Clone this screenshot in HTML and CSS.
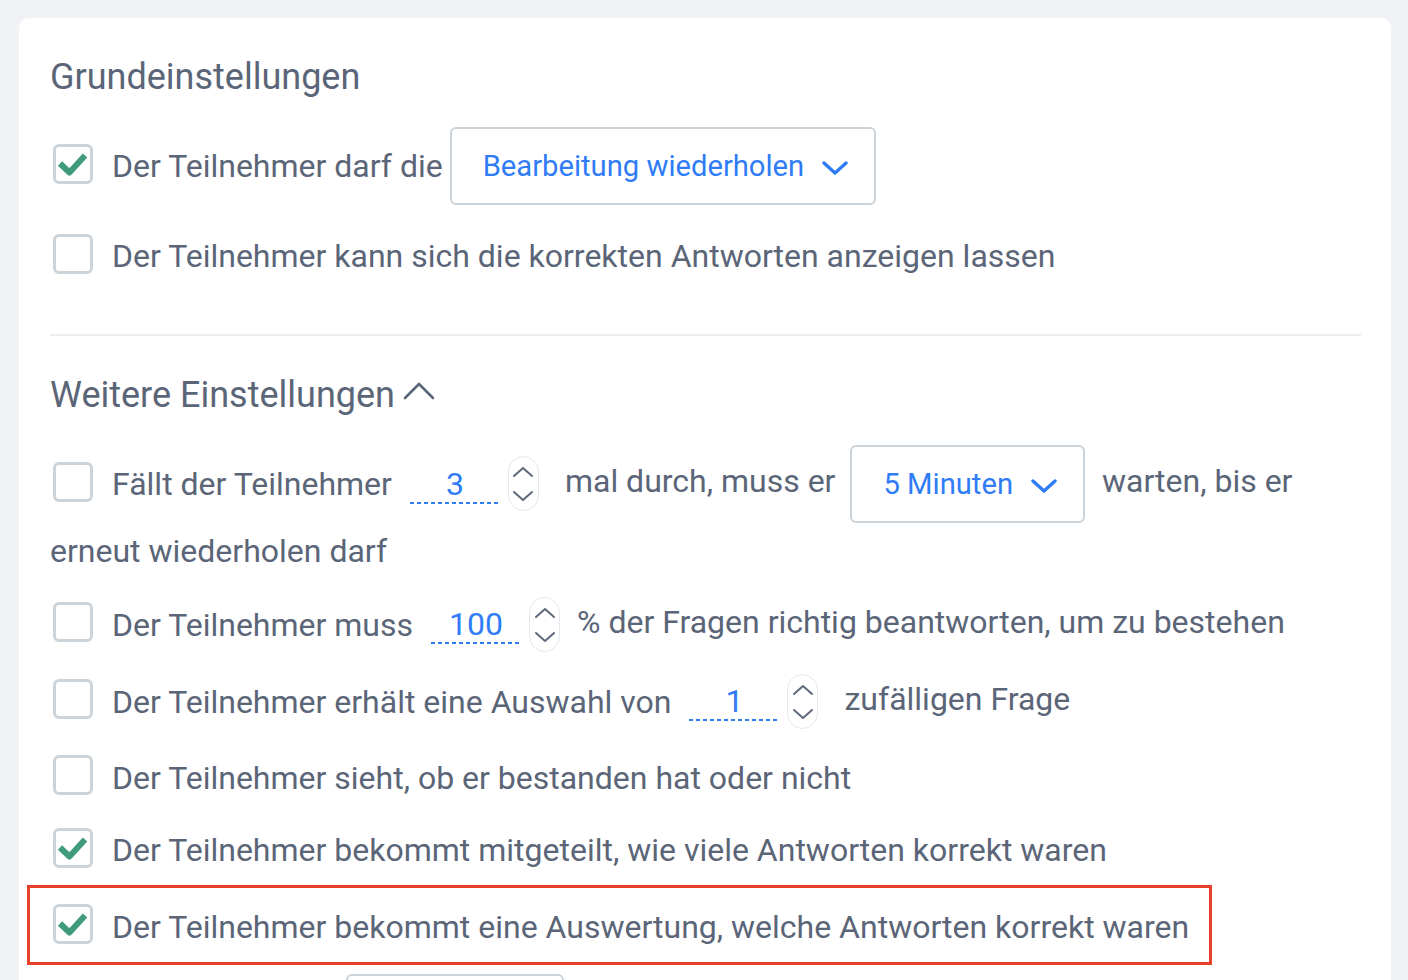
FILE: index.html
```html
<!DOCTYPE html>
<html lang="de">
<head>
<meta charset="utf-8">
<title>Einstellungen</title>
<link rel="stylesheet" href="styles.css">
</head>
<body>
<div class="card">
  <h2 class="heading">Grundeinstellungen</h2>

  <div class="row first"><span class="cb checked"><svg viewBox="0 0 34 34" width="34" height="34"><path d="M4 16.5 L13.5 25.5 L29 8.5" fill="none" stroke="#3f9b7b" stroke-width="6" stroke-linejoin="round"/></svg></span><span class="txt">Der Teilnehmer darf die</span><span class="select sel1">Bearbeitung wiederholen<svg class="chev" viewBox="0 0 26 14" width="26" height="14"><path d="M2 2 L13 12 L24 2" fill="none" stroke="#2f7cf6" stroke-width="3.4" stroke-linecap="round" stroke-linejoin="round"/></svg></span></div>

  <div class="row"><span class="cb"></span><span class="txt">Der Teilnehmer kann sich die korrekten Antworten anzeigen lassen</span></div>

  <hr class="divider">

  <h2 class="heading h2">Weitere Einstellungen<svg class="caret" viewBox="0 0 32 18" width="32" height="18"><path d="M2 16 L16 2 L30 16" fill="none" stroke="#5b6578" stroke-width="2.6" stroke-linecap="round" stroke-linejoin="round"/></svg></h2>

  <div class="row first wrap"><span class="cb"></span><span class="txt">Fällt der Teilnehmer</span><span class="num">3</span><span class="spin"><svg viewBox="0 0 22 12" width="22" height="12"><path d="M2 10 L11 2 L20 10" fill="none" stroke="#5f6a7c" stroke-width="2" stroke-linecap="round" stroke-linejoin="round"/></svg><svg viewBox="0 0 22 12" width="22" height="12"><path d="M2 2 L11 10 L20 2" fill="none" stroke="#5f6a7c" stroke-width="2" stroke-linecap="round" stroke-linejoin="round"/></svg></span>mal durch, muss er<span class="select sel2">5 Minuten<svg class="chev" viewBox="0 0 26 14" width="26" height="14"><path d="M2 2 L13 12 L24 2" fill="none" stroke="#2f7cf6" stroke-width="3.4" stroke-linecap="round" stroke-linejoin="round"/></svg></span>warten, bis er erneut wiederholen darf</div>

  <div class="row r4"><span class="cb"></span><span class="txt">Der Teilnehmer muss</span><span class="num">100</span><span class="spin pct"><svg viewBox="0 0 22 12" width="22" height="12"><path d="M2 10 L11 2 L20 10" fill="none" stroke="#5f6a7c" stroke-width="2" stroke-linecap="round" stroke-linejoin="round"/></svg><svg viewBox="0 0 22 12" width="22" height="12"><path d="M2 2 L11 10 L20 2" fill="none" stroke="#5f6a7c" stroke-width="2" stroke-linecap="round" stroke-linejoin="round"/></svg></span>% der Fragen richtig beantworten, um zu bestehen</div>

  <div class="row tight"><span class="cb"></span><span class="txt">Der Teilnehmer erhält eine Auswahl von</span><span class="num">1</span><span class="spin"><svg viewBox="0 0 22 12" width="22" height="12"><path d="M2 10 L11 2 L20 10" fill="none" stroke="#5f6a7c" stroke-width="2" stroke-linecap="round" stroke-linejoin="round"/></svg><svg viewBox="0 0 22 12" width="22" height="12"><path d="M2 2 L11 10 L20 2" fill="none" stroke="#5f6a7c" stroke-width="2" stroke-linecap="round" stroke-linejoin="round"/></svg></span>zufälligen Frage</div>

  <div class="row tight"><span class="cb"></span><span class="txt">Der Teilnehmer sieht, ob er bestanden hat oder nicht</span></div>

  <div class="row tight"><span class="cb checked"><svg viewBox="0 0 34 34" width="34" height="34"><path d="M4 16.5 L13.5 25.5 L29 8.5" fill="none" stroke="#3f9b7b" stroke-width="6" stroke-linejoin="round"/></svg></span><span class="txt">Der Teilnehmer bekommt mitgeteilt, wie viele Antworten korrekt waren</span></div>

  <div class="row hl"><span class="cb checked"><svg viewBox="0 0 34 34" width="34" height="34"><path d="M4 16.5 L13.5 25.5 L29 8.5" fill="none" stroke="#3f9b7b" stroke-width="6" stroke-linejoin="round"/></svg></span><span class="txt">Der Teilnehmer bekommt eine Auswertung, welche Antworten korrekt waren</span></div>

  <div class="row last"><span class="cb"></span><span class="txt">Die Auswertung</span><span class="select sel3">am Ende<svg class="chev" viewBox="0 0 26 14" width="26" height="14"><path d="M2 2 L13 12 L24 2" fill="none" stroke="#2f7cf6" stroke-width="3.4" stroke-linecap="round" stroke-linejoin="round"/></svg></span></div>
</div>
</body>
</html>
```

FILE: styles.css
```css
html, body {
  margin: 0;
  padding: 0;
}
body {
  background: #f1f2f6;
  height: 980px;
  overflow: hidden;
  font-family: Roboto, "Liberation Sans", Arial, sans-serif;
  color: #5b6578;
}
.card {
  background: #ffffff;
  margin: 18px 17px 0 19px;
  border-radius: 10px;
  padding: 37px 30px 40px 31px;
}
.heading {
  margin: 0;
  font-size: 36px;
  font-weight: 400;
  line-height: 44px;
  color: #5b6578;
}
.h2 {
  display: flex;
  align-items: center;
}
.caret {
  margin-left: 8px;
  margin-top: -8px;
}
.row {
  font-size: 32px;
  line-height: 48px;
  margin-top: 24px;
}
.row.first {
  margin-top: 28px;
}
.row.wrap {
  line-height: 56px;
}
.row.r4 {
  margin-top: 18px;
}
.row.tight {
  margin-top: 22px;
}
.cb {
  display: inline-flex;
  align-items: center;
  justify-content: center;
  box-sizing: border-box;
  width: 40px;
  height: 40px;
  border: 3px solid #ccd4d9;
  border-radius: 6px;
  vertical-align: middle;
  margin: -4px 19px 0 3px;
}
.txt {
  vertical-align: middle;
}
.select {
  display: inline-flex;
  align-items: center;
  box-sizing: border-box;
  height: 78px;
  border: 2px solid #cdd4d9;
  border-radius: 6px;
  padding: 0 26px 0 31px;
  font-size: 29.2px;
  color: #2f7cf6;
  vertical-align: middle;
  gap: 18px;
}
.chev {
  margin-top: 4px;
}
.sel1 {
  margin-left: 7px;
}
.sel2 {
  margin: 0 17px 0 15px;
}
.sel3 {
  margin-left: 9px;
}
.num {
  display: inline-block;
  width: 90px;
  height: 40px;
  line-height: 40px;
  text-align: center;
  color: #2f7cf6;
  vertical-align: middle;
  margin-left: 18px;
  background-image: linear-gradient(to right, #2f7cf6 60%, transparent 60%);
  background-size: 7px 2px;
  background-repeat: repeat-x;
  background-position: left bottom;
}
.spin {
  display: inline-flex;
  flex-direction: column;
  align-items: center;
  justify-content: space-between;
  box-sizing: border-box;
  width: 31px;
  height: 55px;
  padding: 9px 0 8px;
  border: 1.5px solid #e4e7eb;
  border-radius: 16px;
  vertical-align: middle;
  margin: 0 26px 0 8px;
}
.spin.pct {
  margin-right: 17px;
}
.divider {
  border: 0;
  border-top: 2px solid #eceef1;
  margin: 54px 0 37px;
}
.row.hl {
  width: fit-content;
  margin: 11px 0 0 -23px;
  border: 3px solid #e8412b;
  padding: 12px 20px;
}
.row.last {
  margin-top: 9px;
}
```
